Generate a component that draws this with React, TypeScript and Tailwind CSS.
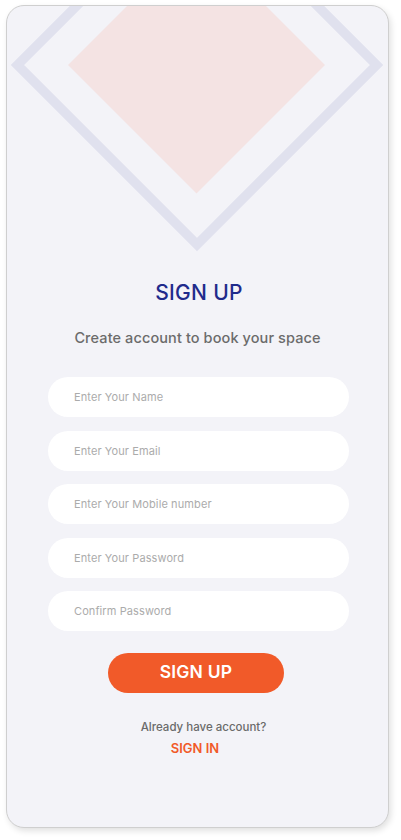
import React from 'react';

const fields = [
  { placeholder: 'Enter Your Name', type: 'text' },
  { placeholder: 'Enter Your Email', type: 'email' },
  { placeholder: 'Enter Your Mobile number', type: 'tel' },
  { placeholder: 'Enter Your Password', type: 'password' },
  { placeholder: 'Confirm Password', type: 'password' },
];

export default function App() {
  return (
    <div className="min-h-screen bg-white pt-[5px] pl-[6px]" style={{ fontFamily: 'Inter, "Noto Sans", sans-serif' }}>
      <div className="w-[383px] h-[823px] rounded-[18px] border border-[#cfcfcf] bg-[#f3f3f8] shadow-[2px_3px_6px_rgba(0,0,0,0.12)] overflow-hidden flex flex-col items-center">
        {/* Decorative diamonds */}
        <svg width="381" height="252" viewBox="7 6 381 252" className="block shrink-0">
          <polygon points="196.5,-63.5 325,65 196.5,193.5 68,65" fill="#f4e3e3" />
          <polygon points="197,-114.5 376.5,65 197,244.5 17.5,65" fill="none" stroke="#e0e1ee" strokeWidth="9.5" />
        </svg>

        <h1 className="mt-[21px] ml-[3px] text-[21px] leading-7 font-medium text-[#1f2b8c] tracking-[0.3px]">SIGN UP</h1>
        <p className="mt-[21px] text-[14.5px] leading-5 font-medium text-[#6b6b6b] tracking-[0.1px]">Create account to book your space</p>

        <form className="mt-[29px] flex flex-col gap-[13.5px] w-[301px] ml-[2px]" onSubmit={(e) => e.preventDefault()}>
          {fields.map((f) => (
            <input
              key={f.placeholder}
              type={f.type}
              placeholder={f.placeholder}
              className="h-[40px] w-full rounded-full bg-white pl-[26px] text-[11px] text-[#444] placeholder:text-[#ababab] outline-none tracking-[0.1px]"
            />
          ))}

          <button
            type="submit"
            className="mt-[8px] self-center -ml-[5px] h-[40px] w-[176px] rounded-full bg-[#f15a29] text-white text-[17.5px] font-semibold tracking-[0.2px]"
          >
            SIGN UP
          </button>
        </form>

        <p className="mt-[26px] text-[11.5px] leading-4 font-medium text-[#6a6a6a] ml-[12px]">Already have account?</p>
        <a href="#" className="mt-[3px] text-[13px] leading-5 font-semibold text-[#f15a29] -ml-[5px]">SIGN IN</a>
      </div>
    </div>
  );
}
